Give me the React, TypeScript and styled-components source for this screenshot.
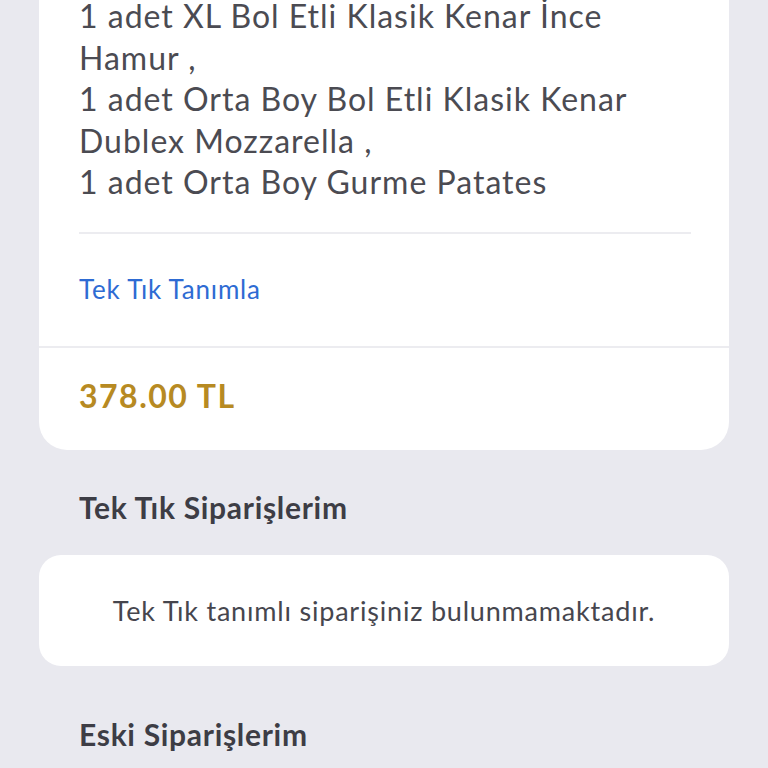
import React from 'react'
import styled, { createGlobalStyle } from 'styled-components'

const GlobalStyle = createGlobalStyle`
  html, body {
    margin: 0;
    padding: 0;
    background: #e9e9ef;
    font-family: Lato, 'Open Sans', sans-serif;
    -webkit-font-smoothing: antialiased;
  }
`

const Page = styled.div`
  width: 768px;
  height: 768px;
  overflow: hidden;
  background: #e9e9ef;
`

const Scroller = styled.div`
  margin-top: -30px;
  padding: 0 39px;
`

const Card = styled.section`
  background: #ffffff;
  border-radius: 28px;
  overflow: hidden;
`

const CardBody = styled.div`
  padding: 25px 38px 0 40px;
`

const Items = styled.p`
  margin: 0;
  padding-bottom: 29px;
  font-size: 32px;
  line-height: 41.5px;
  letter-spacing: 1px;
  color: #4b4b52;
  border-bottom: 2px solid #ececf0;
`

const LinkText = styled.a`
  display: block;
  padding: 40px 0 42px;
  font-size: 26px;
  line-height: 30px;
  letter-spacing: 0.8px;
  color: #2e6bd3;
  text-decoration: none;
`

const PriceRow = styled.div`
  border-top: 2px solid #ececf0;
  padding: 30px 40px 36px;
`

const Price = styled.span`
  font-size: 32px;
  line-height: 36px;
  font-weight: 700;
  letter-spacing: 1.5px;
  color: #b78a22;
`

const SectionTitle = styled.h2<{ $top: number }>`
  margin: 0;
  padding: ${(p) => p.$top}px 40px 31px;
  font-size: 30px;
  line-height: 34px;
  font-weight: 700;
  letter-spacing: 0.7px;
  color: #3d3d45;
`

const EmptyCard = styled.div`
  background: #ffffff;
  border-radius: 22px;
  height: 111px;
  display: flex;
  align-items: center;
  justify-content: center;
  font-size: 27px;
  letter-spacing: 0.8px;
  color: #46464e;
`

const App = () => {
  return (
    <>
      <GlobalStyle />
      <Page>
        <Scroller>
          <Card>
            <CardBody>
              <Items>
                1 adet XL Bol Etli Klasik Kenar İnce
                <br />
                Hamur ,
                <br />
                1 adet Orta Boy Bol Etli Klasik Kenar
                <br />
                Dublex Mozzarella ,
                <br />
                1 adet Orta Boy Gurme Patates
              </Items>
              <LinkText>Tek Tık Tanımla</LinkText>
            </CardBody>
            <PriceRow>
              <Price>378.00 TL</Price>
            </PriceRow>
          </Card>
          <SectionTitle $top={40}>Tek Tık Siparişlerim</SectionTitle>
          <EmptyCard>Tek Tık tanımlı siparişiniz bulunmamaktadır.</EmptyCard>
          <SectionTitle $top={51}>Eski Siparişlerim</SectionTitle>
        </Scroller>
      </Page>
    </>
  )
}

export default App
